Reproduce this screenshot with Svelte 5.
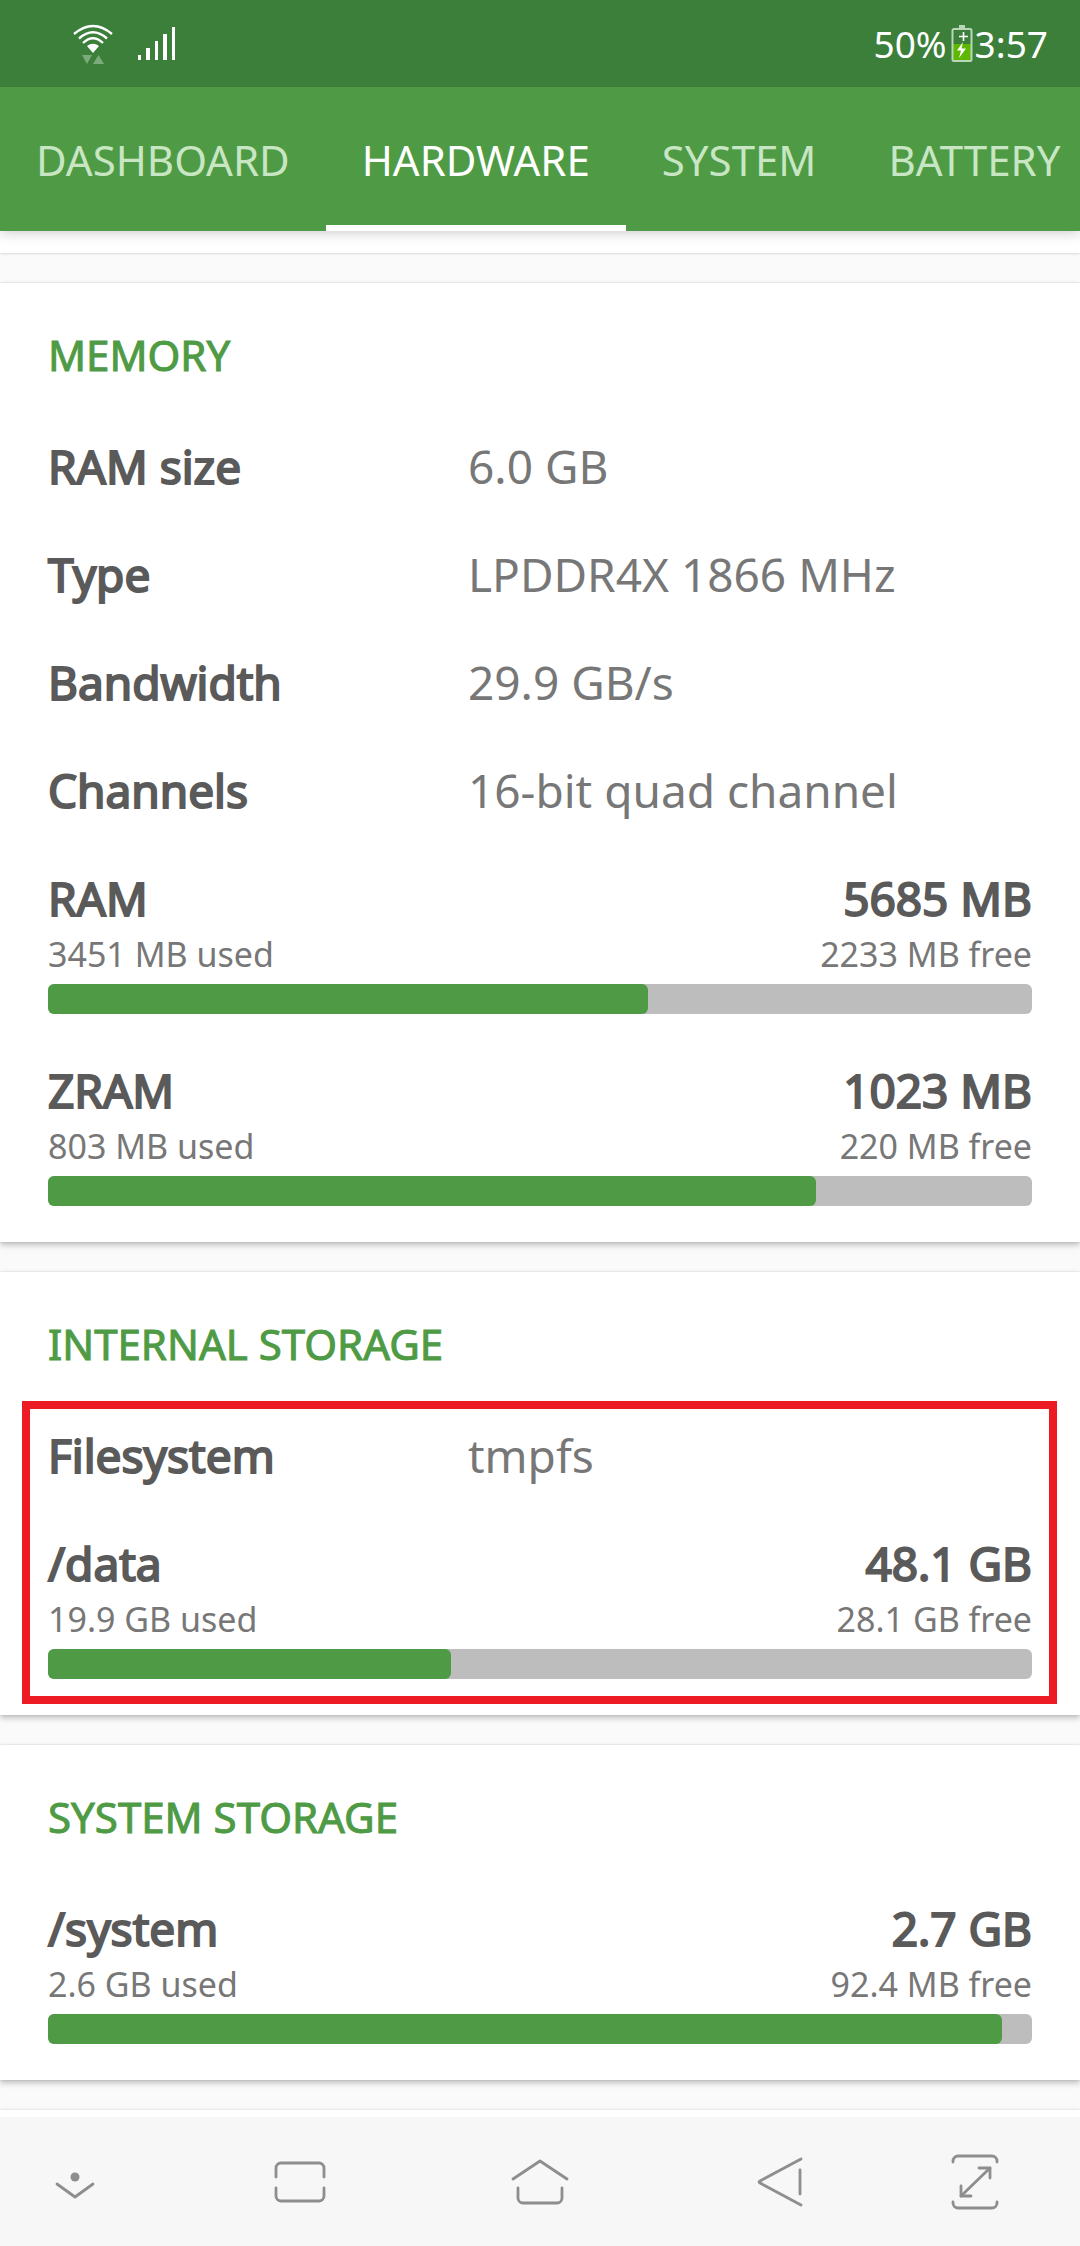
<script lang="ts">
  type Row = { label: string; value: string };
  type Usage = {
    name: string;
    total: string;
    used: string;
    free: string;
    percent: number;
  };
  type Section = {
    title: string;
    rows: Row[];
    usages: Usage[];
    highlighted?: boolean;
  };

  const tabs = ["DASHBOARD", "HARDWARE", "SYSTEM", "BATTERY"];
  let activeTab = $state("HARDWARE");

  const sections: Section[] = [
    {
      title: "MEMORY",
      rows: [
        { label: "RAM size", value: "6.0 GB" },
        { label: "Type", value: "LPDDR4X 1866 MHz" },
        { label: "Bandwidth", value: "29.9 GB/s" },
        { label: "Channels", value: "16-bit quad channel" },
      ],
      usages: [
        { name: "RAM", total: "5685 MB", used: "3451 MB", free: "2233 MB", percent: 61 },
        { name: "ZRAM", total: "1023 MB", used: "803 MB", free: "220 MB", percent: 78 },
      ],
    },
    {
      title: "INTERNAL STORAGE",
      rows: [{ label: "Filesystem", value: "tmpfs" }],
      usages: [
        { name: "/data", total: "48.1 GB", used: "19.9 GB", free: "28.1 GB", percent: 41 },
      ],
      highlighted: true,
    },
    {
      title: "SYSTEM STORAGE",
      rows: [],
      usages: [
        { name: "/system", total: "2.7 GB", used: "2.6 GB", free: "92.4 MB", percent: 97 },
      ],
    },
  ];

  const navButtons = [
    { label: "Hide", paths: ["M14 34L32 47L50 34"], dot: true },
    {
      label: "Recent apps",
      paths: [
        "M8 27V18a5 5 0 0 1 5-5H51a5 5 0 0 1 5 5V27",
        "M8 38V46a5 5 0 0 0 5 5H51a5 5 0 0 0 5-5V38",
      ],
    },
    {
      label: "Home",
      paths: ["M5 29L32 11L59 29", "M10 38V48a5 5 0 0 0 5 5H49a5 5 0 0 0 5-5V38"],
    },
    { label: "Back", paths: ["M53 9L12 31Q10 32 12 33L53 55", "M52 20V44"] },
    {
      label: "Full screen",
      paths: [
        "M10 12V11a5 5 0 0 1 5-5H49a5 5 0 0 1 5 5V12",
        "M10 52V53a5 5 0 0 0 5 5H49a5 5 0 0 0 5-5V52",
        "M18 46L47 18",
        "M36 18H47V28",
        "M18 36V46H28",
      ],
    },
  ];
</script>

<div class="screen">
  <header>
    <div class="status">
      <svg class="wifi" viewBox="0 0 40 40" aria-label="Wi-Fi">
        <g fill="none" stroke="#fff" stroke-width="2.4">
          <path d="M1 10Q20 -6 39 10" />
          <path d="M6 14.500Q20 2 34 14.500" />
          <path d="M10 19Q20 9.500 30 19" />
        </g>
        <path d="M14 22Q20 17.500 26 22L20 29Z" fill="#fff" />
        <path d="M9 31H19L14 40ZM20 40H31L25.500 31Z" fill="#7cab7b" />
      </svg>
      <svg class="signal" viewBox="0 0 40 36" aria-label="Signal">
        <path
          d="M1 29h3v5h-3zM9 22h4v12h-4zM18 15h3v19h-3zM26 8h4v26h-4zM35 1h3v33h-3z"
          fill="#fff"
        />
      </svg>
      <span class="level">50%</span>
      <svg class="battery" viewBox="0 0 22 40" aria-label="Charging">
        <path d="M8 1h6v3h-6z" fill="#b9d6b9" />
        <path d="M2 20H20V37H2Z" fill="#5fb800" />
        <rect x="1.500" y="5" width="19" height="32" rx="1.500" fill="none" stroke="#b9d6b9" stroke-width="2" />
        <path d="M12.500 8v9M8 12.500h9" stroke="#fff" stroke-width="1.600" />
        <path d="M12 18L6 26.500H10L8 34L15 24.500H10.500Z" fill="#fff" />
      </svg>
      <span>3:57</span>
    </div>
    <div class="tabs" role="tablist">
      {#each tabs as tab}
        <button
          role="tab"
          class:active={tab === activeTab}
          aria-selected={tab === activeTab}
          onclick={() => (activeTab = tab)}
        >
          {tab}
        </button>
      {/each}
    </div>
  </header>

  <main>
    <div class="card previous"></div>
    {#each sections as section}
      <section class="card">
        <h2>{section.title}</h2>
        <div class="entries" class:highlighted={section.highlighted}>
          {#each section.rows as row}
            <dl>
              <dt>{row.label}</dt>
              <dd>{row.value}</dd>
            </dl>
          {/each}
          {#each section.usages as usage}
            <div class="usage">
              <div class="total">
                <span>{usage.name}</span>
                <span>{usage.total}</span>
              </div>
              <div class="split">
                <span>{usage.used} used</span>
                <span>{usage.free} free</span>
              </div>
              <div
                class="bar"
                role="progressbar"
                aria-label={usage.name}
                aria-valuenow={usage.percent}
              >
                <div class="fill" style="width: {usage.percent}%"></div>
              </div>
            </div>
          {/each}
        </div>
      </section>
    {/each}
    <div class="card next"></div>
  </main>

  <nav>
    {#each navButtons as button}
      <button aria-label={button.label}>
        <svg viewBox="0 0 64 64">
          {#each button.paths as d}
            <path {d} />
          {/each}
          {#if button.dot}
            <circle cx="32" cy="27" r="4.500" />
          {/if}
        </svg>
      </button>
    {/each}
  </nav>
</div>

<style>
  :global(body) {
    margin: 0;
  }

  .screen {
    --green: #4f9b45;
    display: flex;
    flex-direction: column;
    height: 100vh;
    background: #fafafa;
    font-family: "Noto Sans", sans-serif;
    color: #777;
  }

  button {
    padding: 0;
    border: none;
    background: none;
    font: inherit;
    color: inherit;
    cursor: pointer;
  }

  header {
    position: relative;
    z-index: 1;
    background: var(--green);
    box-shadow: 0 2px 12px rgba(0, 0, 0, 0.2);
  }

  .status {
    display: flex;
    align-items: center;
    height: 87px;
    padding: 0 32px 0 73px;
    background: #3b7f3b;
    color: #fff;
    font-size: 37px;
  }

  .wifi {
    width: 40px;
    height: 40px;
  }

  .signal {
    width: 40px;
    height: 36px;
    margin-left: 24px;
  }

  .level {
    margin-left: auto;
  }

  .battery {
    width: 22px;
    height: 40px;
    margin: 0 2px 0 4px;
  }

  .tabs {
    display: flex;
    height: 144px;
    overflow: hidden;
    color: #c8e6c3;
    font-size: 42px;
  }

  .tabs button {
    flex: none;
    padding: 0 36px;
    box-sizing: border-box;
  }

  .tabs .active {
    color: #fff;
    box-shadow: inset 0 -6px #fff;
  }

  main {
    display: flex;
    flex: 1;
    flex-direction: column;
    gap: 30px;
    min-height: 0;
    overflow: hidden;
  }

  .card {
    flex: none;
    padding: 37px 48px 36px;
    background: #fff;
    box-shadow:
      0 0 2px rgba(0, 0, 0, 0.14),
      0 3px 6px rgba(0, 0, 0, 0.24);
  }

  .previous {
    height: 22px;
    padding: 0;
    box-shadow: 0 0 3px rgba(0, 0, 0, 0.24);
  }

  .next {
    flex: 1;
    padding: 0;
  }

  h2 {
    margin: 0 0 44px;
    color: var(--green);
    font-size: 42px;
    font-weight: 400;
    line-height: 70px;
    -webkit-text-stroke: 1px;
  }

  .entries {
    position: relative;
    display: grid;
    gap: 44px;
  }

  .highlighted::after {
    content: "";
    position: absolute;
    inset: -22px -25px -25px -26px;
    border: 8px solid #ed1c24;
    pointer-events: none;
  }

  dl {
    display: grid;
    grid-template-columns: 420px 1fr;
    margin: 0;
    font-size: 46px;
    line-height: 64px;
  }

  dt,
  .total {
    color: #5a5a5a;
    -webkit-text-stroke: 2px;
  }

  dd {
    margin: 0;
  }

  .total,
  .split {
    display: flex;
    justify-content: space-between;
  }

  .total {
    font-size: 46px;
    line-height: 64px;
  }

  .split {
    font-size: 34px;
    line-height: 48px;
  }

  .bar {
    height: 30px;
    margin-top: 6px;
    border-radius: 6px;
    background: #bdbdbd;
  }

  .fill {
    height: 100%;
    border-radius: 6px;
    background: var(--green);
  }

  nav {
    position: relative;
    display: grid;
    grid-template-columns: 5fr 10fr 6fr 10fr 3fr 2fr;
    height: 129px;
    background: #f7f7f7;
  }

  nav button {
    display: flex;
    align-items: center;
    justify-content: center;
  }

  nav svg {
    width: 64px;
    height: 64px;
    fill: none;
    stroke: #8e8e8e;
    stroke-width: 2.8;
    stroke-linecap: round;
    stroke-linejoin: round;
  }

  nav circle {
    fill: #8e8e8e;
    stroke: none;
  }
</style>
